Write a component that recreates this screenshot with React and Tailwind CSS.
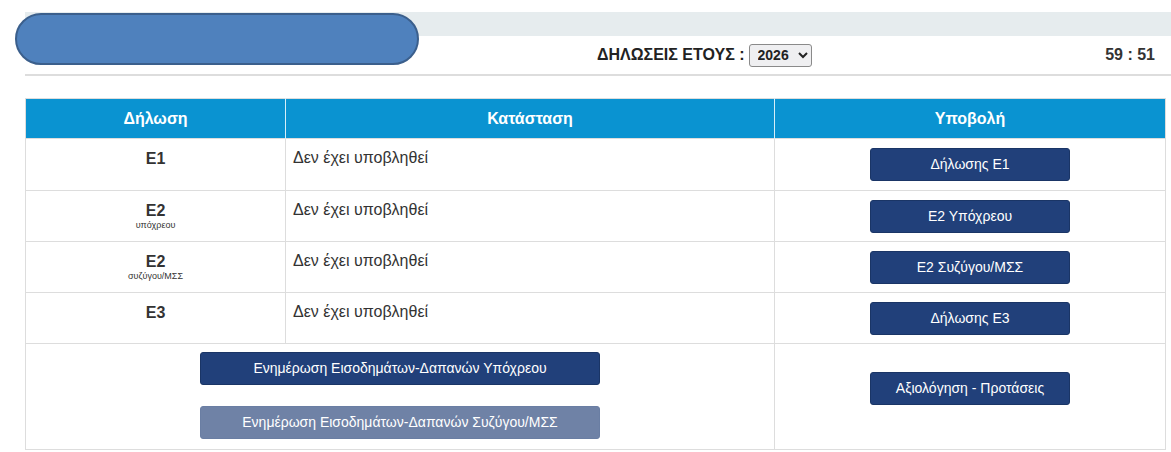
import { useState } from 'react'

const rows = [
  { code: 'E1', sub: null, button: 'Δήλωσης Ε1', h: 'h-[52px]' },
  { code: 'E2', sub: 'υπόχρεου', button: 'Ε2 Υπόχρεου', h: 'h-[51px]' },
  { code: 'E2', sub: 'συζύγου/ΜΣΣ', button: 'Ε2 Συζύγου/ΜΣΣ', h: 'h-[51px]' },
  { code: 'E3', sub: null, button: 'Δήλωσης Ε3', h: 'h-[51px]' },
]

const btn =
  'inline-flex items-center justify-center w-[200px] h-[33px] rounded-[3px] bg-[#21407a] text-white text-[14px] border border-[#1a3566]'

const App = () => {
  const [year, setYear] = useState('2026')

  return (
    <div className="relative min-h-screen bg-white font-['Liberation_Sans',Arial,sans-serif] text-[#333]">
      {/* redaction blob over the header */}
      <div className="absolute left-[15px] top-[13px] w-[404px] h-[52px] rounded-full bg-[#4f81bd] border-2 border-[#3b5f8c]"></div>

      <div className="pt-[12px] pl-[25px]">
        <div className="h-[24px] bg-[#e6ecee]"></div>
        <div className="flex items-center h-[40px] border-b-2 border-[#dddddd]">
          <div className="flex items-center ml-[572px]">
            <span className="text-[16px] font-bold text-[#222]">ΔΗΛΩΣΕΙΣ ΕΤΟΥΣ :</span>
            <select
              value={year}
              onChange={(e) => setYear(e.target.value)}
              className="ml-[4px] h-[23px] w-[63px] px-[4px] text-[14px] font-bold text-[#222] bg-[#efeff1] border border-[#8a8a8a] rounded-[3px]"
            >
              <option value="2026">2026</option>
              <option value="2025">2025</option>
            </select>
          </div>
          <span className="ml-auto mr-[16px] text-[16px] font-bold text-[#333]">59 : 51</span>
        </div>
      </div>

      <div className="pl-[25px] pr-[6px] pt-[22px]">
        <table className="w-[1140px] border-collapse table-fixed border border-[#dddddd]">
          <colgroup>
            <col className="w-[260px]" />
            <col className="w-[489px]" />
            <col className="w-[391px]" />
          </colgroup>
          <thead>
            <tr className="h-[40px] bg-[#0a93d1] text-white text-[16px] font-bold">
              <th className="border-r border-[#d7eef8]">Δήλωση</th>
              <th className="border-r border-[#d7eef8]">Κατάσταση</th>
              <th>Υποβολή</th>
            </tr>
          </thead>
          <tbody>
            {rows.map((r, i) => (
              <tr key={i} className={`${r.h} border-t border-[#dddddd] align-top`}>
                <td className="border-r border-[#dddddd] text-center pt-[11px]">
                  <div className="text-[16px] font-bold leading-[18px] text-[#333]">{r.code}</div>
                  {r.sub && <div className="text-[9px] leading-[11px] text-[#333]">{r.sub}</div>}
                </td>
                <td className="border-r border-[#dddddd] pl-[7px] pt-[10px] text-[16px] leading-[18px] text-[#333]">
                  Δεν έχει υποβληθεί
                </td>
                <td className="text-center pt-[9px]">
                  <button className={btn}>{r.button}</button>
                </td>
              </tr>
            ))}
            <tr className="h-[106px] border-t border-[#dddddd] align-top">
              <td colSpan={2} className="border-r border-[#dddddd] text-center pt-[8px]">
                <div className="flex flex-col items-center gap-[21px]">
                  <button className="inline-flex items-center justify-center w-[400px] h-[33px] rounded-[3px] bg-[#21407a] text-white text-[14px] border border-[#1a3566]">
                    Ενημέρωση Εισοδημάτων-Δαπανών Υπόχρεου
                  </button>
                  <button className="inline-flex items-center justify-center w-[400px] h-[33px] rounded-[3px] bg-[#6f82a6] text-white text-[14px] border border-[#6a7ea3]">
                    Ενημέρωση Εισοδημάτων-Δαπανών Συζύγου/ΜΣΣ
                  </button>
                </div>
              </td>
              <td className="text-center pt-[28px]">
                <button className={btn}>Αξιολόγηση - Προτάσεις</button>
              </td>
            </tr>
          </tbody>
        </table>
      </div>
    </div>
  )
}

export default App
